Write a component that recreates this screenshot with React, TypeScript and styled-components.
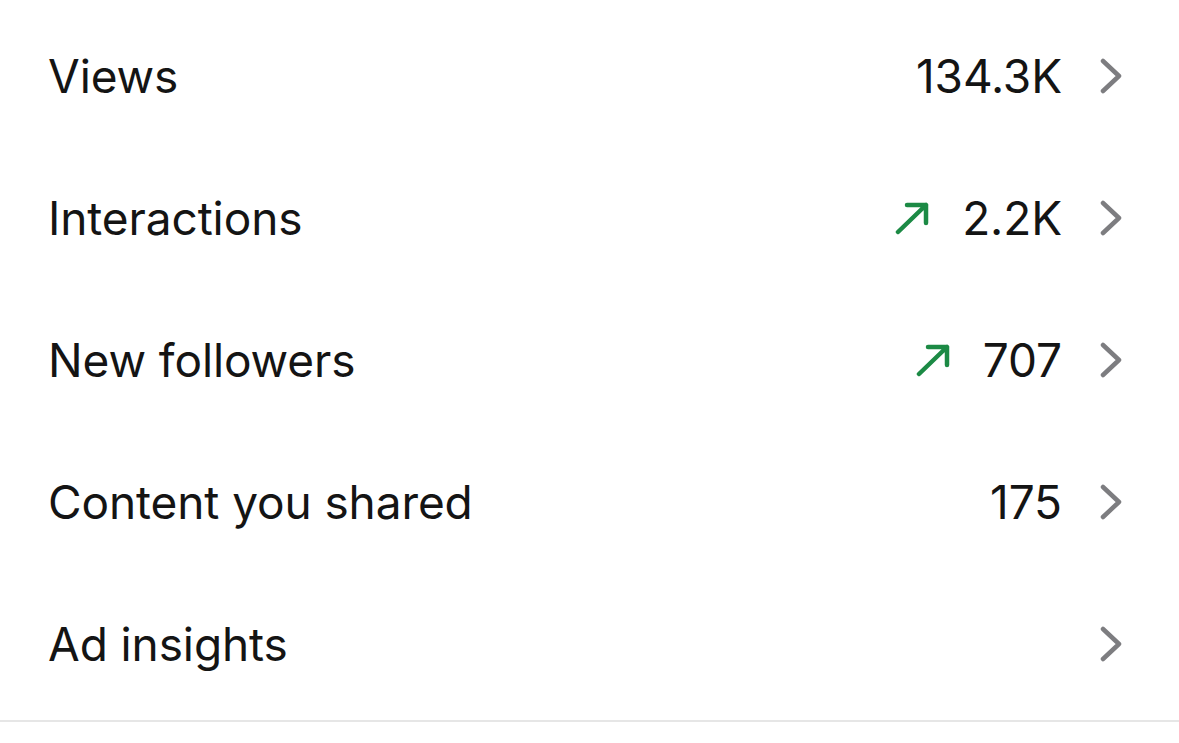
import React, { FC } from 'react';
import styled, { createGlobalStyle } from 'styled-components';

const GlobalStyle = createGlobalStyle`
  html, body {
    margin: 0;
    padding: 0;
    background: #ffffff;
  }
  body {
    font-family: Inter, "Noto Sans", "Liberation Sans", sans-serif;
    -webkit-font-smoothing: antialiased;
  }
`;

const Wrapper = styled.div`
  width: 1179px;
  height: 743px;
  background-color: #ffffff;
  box-sizing: border-box;
  padding-top: 5px;
  display: flex;
  flex-direction: column;
  overflow: hidden;
`;

const List = styled.div`
  display: flex;
  flex-direction: column;
`;

const Row = styled.div`
  display: flex;
  align-items: center;
  justify-content: space-between;
  height: 142px;
  padding: 0 57px 0 48px;
  color: #141414;
`;

const Label = styled.span`
  font-size: 46px;
  font-weight: 400;
  letter-spacing: -0.1px;
`;

const Right = styled.div`
  display: flex;
  align-items: center;
`;

const Value = styled.span`
  font-size: 46px;
  font-weight: 400;
  letter-spacing: -0.1px;
  margin-right: 38px;
`;

const Trend = styled.svg`
  width: 36px;
  height: 34px;
  margin-right: 32px;
`;

const Chevron = styled.svg`
  width: 22px;
  height: 36px;
`;

const Divider = styled.div`
  height: 2px;
  margin-top: 5px;
  background-color: #e6e6e6;
  width: 100%;
`;

type Stat = {
  label: string;
  value?: string;
  up?: boolean;
};

const stats: Stat[] = [
  { label: 'Views', value: '134.3K' },
  { label: 'Interactions', value: '2.2K', up: true },
  { label: 'New followers', value: '707', up: true },
  { label: 'Content you shared', value: '175' },
  { label: 'Ad insights' },
];

const UpArrow: FC = () => (
  <Trend viewBox="0 0 36 34" fill="none">
    <path
      d="M4 31L32 4M13 4H32V22"
      stroke="#1c8a45"
      strokeWidth="4.5"
      strokeLinecap="round"
      strokeLinejoin="round"
    />
  </Trend>
);

const ChevronRight: FC = () => (
  <Chevron viewBox="0 0 22 36" fill="none">
    <path
      d="M3 3L19 18L3 33"
      stroke="#7d7d80"
      strokeWidth="4.5"
      strokeLinecap="round"
      strokeLinejoin="round"
    />
  </Chevron>
);

export default function App() {
  return (
    <>
      <GlobalStyle />
      <Wrapper>
        <List>
          {stats.map((stat) => (
            <Row key={stat.label}>
              <Label>{stat.label}</Label>
              <Right>
                {stat.up && <UpArrow />}
                {stat.value && <Value>{stat.value}</Value>}
                <ChevronRight />
              </Right>
            </Row>
          ))}
        </List>
        <Divider />
      </Wrapper>
    </>
  );
}
